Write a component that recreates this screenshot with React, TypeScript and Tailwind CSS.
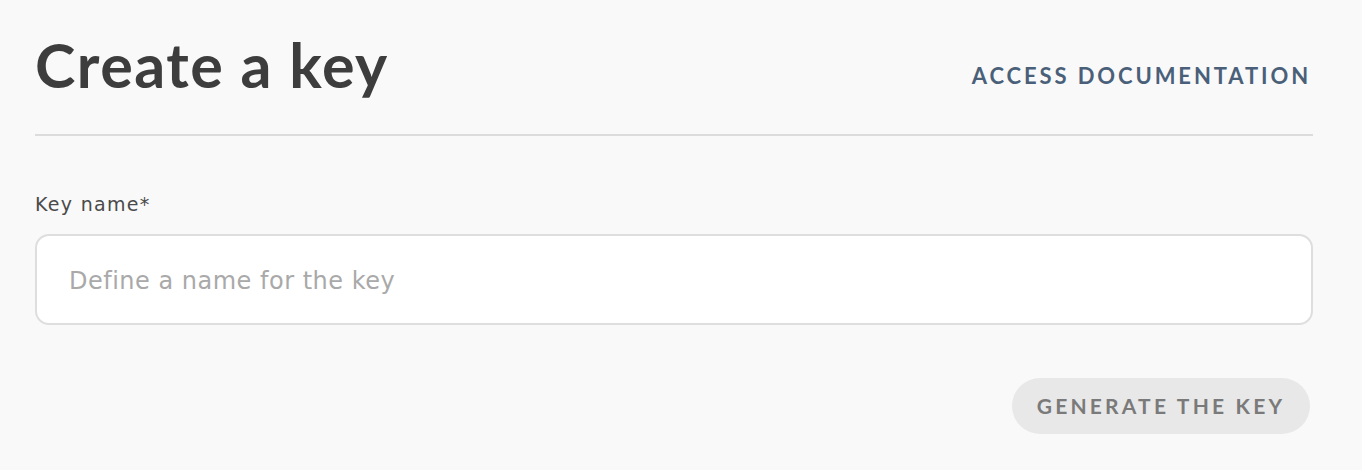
import React from "react";

export default function App() {
  return (
    <div className="min-h-[470px] w-full bg-[#f9f9f9] px-[35px] pt-[30px] pb-[36px]" style={{ fontFamily: "Lato, 'Open Sans', sans-serif" }}>
      <div className="w-[1278px]">
        <div className="flex items-center justify-between h-[72px]">
          <h1 className="text-[61px] leading-none font-bold text-[#3d3d3d] tracking-[1.5px] mt-[-4px]">Create a key</h1>
          <a className="text-[22px] font-bold tracking-[2.9px] text-[#4a6079] mt-[18px] pr-[2px]">ACCESS DOCUMENTATION</a>
        </div>
        <div className="mt-[32px] h-[2px] bg-[#dcdcdc]" />
        <label className="block mt-[56px] text-[19px] leading-[24px] text-[#4a4a4a] tracking-[1.3px] font-['DejaVu_Sans',sans-serif]">Key name*</label>
        <div className="mt-[18px] h-[91px] rounded-[14px] border-2 border-[#dedede] bg-white flex items-center px-[32px]">
          <span className="text-[24px] text-[#a9a9a9] tracking-[0.5px] mt-[2px] font-['DejaVu_Sans',sans-serif]">Define a name for the key</span>
        </div>
        <div className="mt-[53px] flex justify-end pr-[3px]">
          <button className="h-[56px] w-[298px] rounded-full bg-[#e8e8e8] text-[21px] font-bold tracking-[3.2px] text-[#7a7a7a]">GENERATE THE KEY</button>
        </div>
      </div>
    </div>
  );
}
